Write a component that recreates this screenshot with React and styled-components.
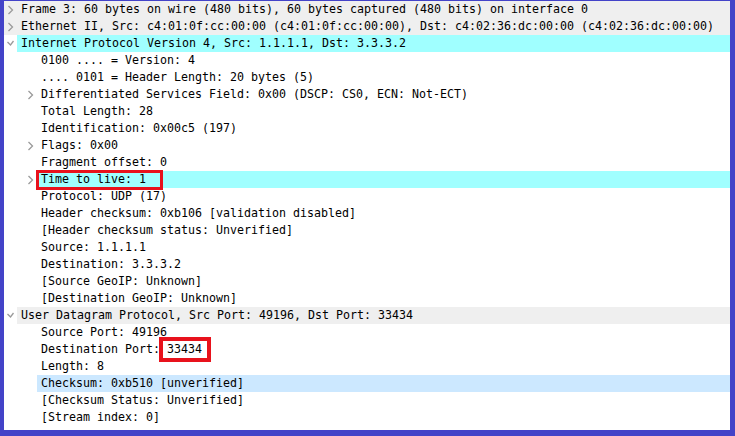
import React from 'react';
import styled, { createGlobalStyle } from 'styled-components';

const GlobalStyle = createGlobalStyle`
  html, body {
    margin: 0;
    padding: 0;
    background: #ffffff;
  }
`;

const tree = [
  { depth: 0, toggle: 'closed', text: 'Frame 3: 60 bytes on wire (480 bits), 60 bytes captured (480 bits) on interface 0', fill: 'gray', full: true },
  { depth: 0, toggle: 'closed', text: 'Ethernet II, Src: c4:01:0f:cc:00:00 (c4:01:0f:cc:00:00), Dst: c4:02:36:dc:00:00 (c4:02:36:dc:00:00)', fill: 'gray', full: true },
  { depth: 0, toggle: 'open', text: 'Internet Protocol Version 4, Src: 1.1.1.1, Dst: 3.3.3.2', fill: 'cyan' },
  { depth: 1, text: '0100 .... = Version: 4' },
  { depth: 1, text: '.... 0101 = Header Length: 20 bytes (5)' },
  { depth: 1, toggle: 'closed', text: 'Differentiated Services Field: 0x00 (DSCP: CS0, ECN: Not-ECT)' },
  { depth: 1, text: 'Total Length: 28' },
  { depth: 1, text: 'Identification: 0x00c5 (197)' },
  { depth: 1, toggle: 'closed', text: 'Flags: 0x00' },
  { depth: 1, text: 'Fragment offset: 0' },
  { depth: 1, toggle: 'closed', text: 'Time to live: 1', fill: 'cyan', mark: 'ttl' },
  { depth: 1, text: 'Protocol: UDP (17)' },
  { depth: 1, text: 'Header checksum: 0xb106 [validation disabled]' },
  { depth: 1, text: '[Header checksum status: Unverified]' },
  { depth: 1, text: 'Source: 1.1.1.1' },
  { depth: 1, text: 'Destination: 3.3.3.2' },
  { depth: 1, text: '[Source GeoIP: Unknown]' },
  { depth: 1, text: '[Destination GeoIP: Unknown]' },
  { depth: 0, toggle: 'open', text: 'User Datagram Protocol, Src Port: 49196, Dst Port: 33434', fill: 'gray' },
  { depth: 1, text: 'Source Port: 49196' },
  { depth: 1, text: 'Destination Port: ', value: '33434', mark: 'port' },
  { depth: 1, text: 'Length: 8' },
  { depth: 1, text: 'Checksum: 0xb510 [unverified]', fill: 'blue' },
  { depth: 1, text: '[Checksum Status: Unverified]' },
  { depth: 1, text: '[Stream index: 0]' },
];

const fills = {
  gray: '#efefef',
  cyan: '#a0ffff',
  blue: '#cce8ff',
};

// red annotation boxes drawn over the tree
const marks = {
  ttl: { top: -1, right: -17, bottom: -2, left: -5, width: 3 },
  port: { top: -4, right: -9, bottom: -4, left: -8, width: 4 },
};

const Frame = styled.div`
  width: 735px;
  height: 436px;
  box-sizing: border-box;
  border-style: solid;
  border-color: #4343c8;
  border-width: 1px 5px 6px 4px;
  background: #ffffff;
  overflow: hidden;
  display: flex;
  flex-direction: column;
  font-family: "DejaVu Sans Mono", "Liberation Mono", monospace;
  font-size: 11.63px;
  color: #000000;
`;

const Row = styled.div`
  display: flex;
  align-items: stretch;
  height: 17px;
  line-height: 17px;
  white-space: pre;
  padding-left: ${(p) => p.$depth * 20}px;
  background: ${(p) => (p.$full ? fills[p.$fill] : 'transparent')};
`;

const Toggle = styled.span`
  flex: 0 0 13px;
  display: flex;
  align-items: center;
  justify-content: center;
  color: #9a9a9a;
`;

const Label = styled.span`
  flex: 1;
  padding-left: 4px;
  background: ${(p) => (p.$fill ? fills[p.$fill] : 'transparent')};
`;

const Marked = styled.span`
  position: relative;
  display: inline-block;
  height: 17px;
  background: ${(p) => (p.$white ? '#ffffff' : 'transparent')};

  &::after {
    content: '';
    position: absolute;
    top: ${(p) => p.$m.top}px;
    right: ${(p) => p.$m.right}px;
    bottom: ${(p) => p.$m.bottom}px;
    left: ${(p) => p.$m.left}px;
    border: ${(p) => p.$m.width}px solid #e8121c;
  }
`;

const Chevron = ({ open }) =>
  open ? (
    <svg width="9" height="7" viewBox="0 0 9 7">
      <path d="M1.5 2 L4.5 5 L7.5 1" fill="none" stroke="currentColor" strokeWidth="1.3" />
    </svg>
  ) : (
    <svg width="7" height="10" viewBox="0 0 7 10">
      <path d="M1.5 1 L5.5 5 L1.5 9" fill="none" stroke="currentColor" strokeWidth="1.3" />
    </svg>
  );

const TreeRow = ({ item }) => {
  let content = item.text;
  if (item.mark === 'ttl') {
    content = <Marked $m={marks.ttl}>{item.text}</Marked>;
  } else if (item.mark === 'port') {
    content = (
      <>
        {item.text}
        <Marked $m={marks.port} $white>{item.value}</Marked>
      </>
    );
  }

  return (
    <Row $depth={item.depth} $full={item.full} $fill={item.fill}>
      <Toggle>{item.toggle && <Chevron open={item.toggle === 'open'} />}</Toggle>
      <Label $fill={item.full ? null : item.fill}>{content}</Label>
    </Row>
  );
};

const App = () => {
  return (
    <>
      <GlobalStyle />
      <Frame>
        {tree.map((item, i) => (
          <TreeRow key={i} item={item} />
        ))}
      </Frame>
    </>
  );
};

export default App;
